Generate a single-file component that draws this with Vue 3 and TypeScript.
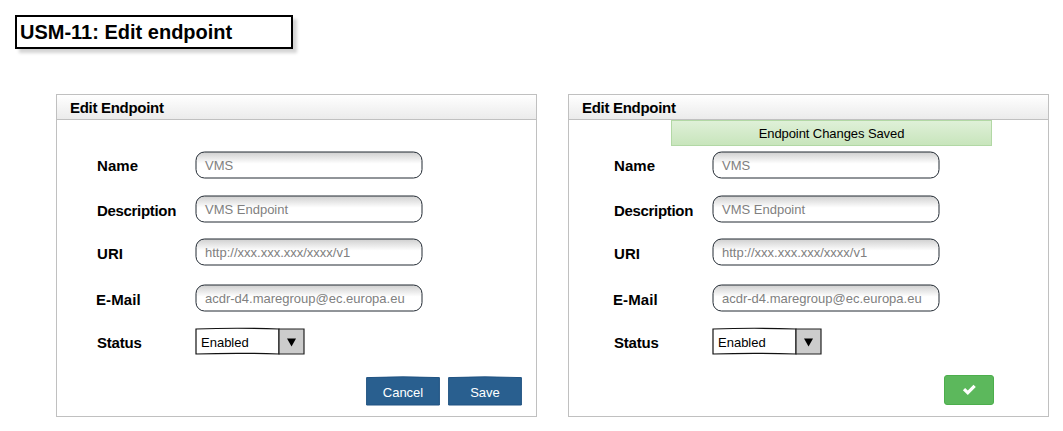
<script setup lang="ts">
interface Row {
  label: string
  value: string
  kind: string
}

const rows: Row[] = [
  { label: 'Name', value: 'VMS', kind: 'name' },
  { label: 'Description', value: 'VMS Endpoint', kind: 'description' },
  { label: 'URI', value: 'http://xxx.xxx.xxx/xxxx/v1', kind: 'uri' },
  { label: 'E-Mail', value: 'acdr-d4.maregroup@ec.europa.eu', kind: 'email' },
  { label: 'Status', value: 'Enabled', kind: 'status' },
]

const panels = [
  { id: 'editing', saved: false },
  { id: 'saved', saved: true },
]
</script>

<template>
  <main class="page">
    <h1 class="title"><span>USM-11: Edit endpoint</span></h1>
    <div class="panels">
      <section v-for="panel in panels" :key="panel.id" class="panel" :class="panel.id">
        <h2 class="panel-head"><span>Edit Endpoint</span></h2>
        <div v-if="panel.saved" class="notice"><span>Endpoint Changes Saved</span></div>
        <div class="form">
          <div v-for="row in rows" :key="row.kind" class="row" :class="row.kind">
            <span class="label"><span>{{ row.label }}</span></span>
            <div v-if="row.kind !== 'status'" class="field">
              <svg class="frame" width="228" height="28" viewBox="0 0 228 28">
                <defs>
                  <linearGradient :id="panel.id + row.kind" x1="0" y1="0" x2="0" y2="1">
                    <stop offset="0" stop-color="#cfcfcf" />
                    <stop offset="0.45" stop-color="#fff" />
                  </linearGradient>
                </defs>
                <rect x="1" y="1" width="226" height="26" rx="8.5" :fill="`url(#${panel.id + row.kind})`" stroke="#222a33" />
              </svg>
              <span class="value">{{ row.value }}</span>
            </div>
            <div v-else class="select">
              <svg class="frame" width="110" height="28" viewBox="0 0 110 28">
                <path d="M1 2 Q42 .5 84 2 V27 Q42 25.6 1 27Z" fill="#fff" stroke="#111" stroke-width="1.2" />
                <path d="M84 2 H109 V27 H84Z" fill="#ccc" stroke="#222" stroke-width="1.2" />
                <path d="M92 11.5 H101 L96.5 19.5Z" fill="#000" />
              </svg>
              <span class="value">{{ row.value }}</span>
            </div>
          </div>
        </div>
        <div class="actions">
          <template v-if="!panel.saved">
            <button v-for="name in ['Cancel', 'Save']" :key="name" type="button" class="button">
              <svg class="frame" width="74" height="30" viewBox="0 0 74 30">
                <path d="M.6 1.6 Q37 .1 73.4 1.6 V29 H.6Z" fill="#295f8f" stroke="#215382" />
              </svg>
              <span>{{ name }}</span>
            </button>
          </template>
          <button v-else type="button" class="done" aria-label="Done">
            <svg width="14" height="12" viewBox="0 0 14 12">
              <path d="M.9 6.2 3.1 4 5.8 6.6 11.5 .8 13.8 3.1 5.8 11Z" fill="#fff" />
            </svg>
          </button>
        </div>
      </section>
    </div>
  </main>
</template>

<style>
body {
  margin: 0;
  background: #fff;
}
</style>

<style scoped>
.page {
  box-sizing: border-box;
  width: 1063px;
  height: 431px;
  padding: 15px 0 0 15px;
  overflow: hidden;
  color: #000;
  font: 13px/16px "Liberation Sans", Arial, sans-serif;
}
.title {
  box-sizing: border-box;
  width: 278px;
  height: 34px;
  margin: 0;
  padding: 3px 0 0 3px;
  border: 2px solid #000;
  box-shadow: 4px 4px 3px rgba(0, 0, 0, 0.17);
  font-size: 20px;
  line-height: 24px;
  white-space: nowrap;
}
.panels {
  display: flex;
  gap: 31px;
  margin: 45px 0 0 41px;
}
.panel {
  box-sizing: border-box;
  flex: none;
  width: 481px;
  height: 323px;
  border: 1px solid #c0c0c0;
  display: flex;
  flex-direction: column;
}
.panel-head {
  box-sizing: border-box;
  height: 25px;
  margin: 0;
  padding: 4px 0 0 13px;
  border-bottom: 1px solid #c0c0c0;
  background: linear-gradient(#fff, #ebebeb);
  font-size: 15px;
  line-height: 17px;
  letter-spacing: -0.3px;
}
.notice {
  box-sizing: border-box;
  width: 321px;
  height: 26px;
  margin: 0 0 -26px 102px;
  border: 1px solid #b2d8a5;
  background: linear-gradient(#dff0d8, #c8e5bc);
  text-align: center;
  line-height: 25px;
  letter-spacing: -0.08px;
}
.form {
  padding: 31px 0 0 40px;
}
.saved .form {
  padding-left: 45px;
}
.row {
  display: flex;
  height: 28px;
  margin-bottom: 16px;
}
.description {
  margin-bottom: 15px;
}
.uri {
  margin-bottom: 18px;
}
.email {
  margin-bottom: 15px;
}
.status {
  margin-bottom: 0;
}
.label {
  width: 98px;
  font-size: 15px;
  font-weight: bold;
  line-height: 30px;
  letter-spacing: -0.32px;
}
.name .label,
.uri .label,
.email .label {
  letter-spacing: 0.1px;
}
.status .label {
  letter-spacing: -0.2px;
}
.description .label,
.uri .label,
.email .label,
.status .label {
  line-height: 32px;
}
.email .label span {
  margin-left: -1px;
}
.field,
.select {
  display: grid;
  height: 28px;
}
.frame,
.value {
  grid-area: 1 / 1;
  display: block;
}
.value {
  padding-left: 10px;
  line-height: 29px;
  color: #808080;
  white-space: nowrap;
}
.select .value {
  padding-left: 6px;
  line-height: 31px;
  color: #000;
}
.actions {
  display: flex;
  justify-content: flex-end;
  gap: 8px;
  margin: 21px 14px 0 0;
}
.button {
  display: grid;
  width: 74px;
  height: 30px;
  padding: 0;
  border: 0;
  background: none;
  color: #fff;
  font: inherit;
  line-height: 33px;
}
.button span {
  grid-area: 1 / 1;
}
.saved .actions {
  margin: 20px 54px 0 0;
}
.done {
  display: flex;
  align-items: center;
  justify-content: center;
  width: 50px;
  height: 30px;
  padding: 0;
  border: 1px solid #4cae4c;
  border-radius: 3px;
  background: #5cb85c;
}
</style>
